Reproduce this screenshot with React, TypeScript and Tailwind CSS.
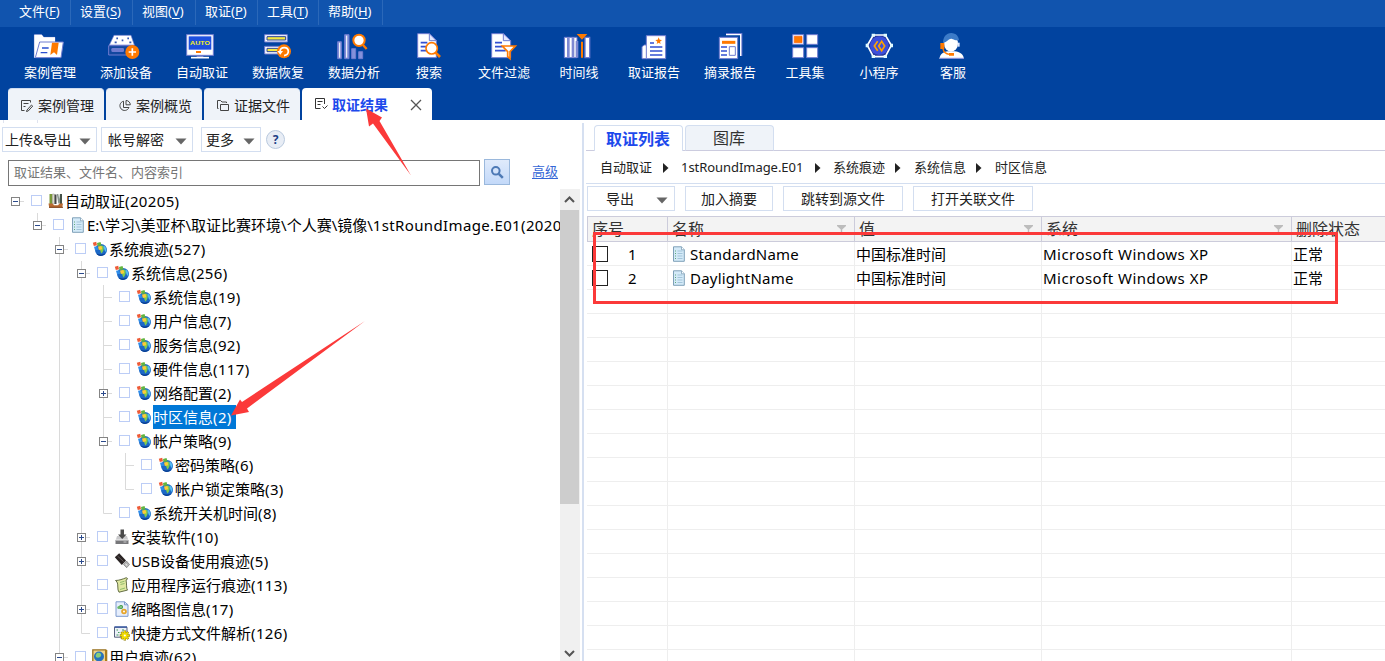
import React from "react";

const P = "#6f7cd0";
const O = "#ff7a00";

function Tool({ vb, label, w, children }: { vb: string; label: string; w?: string; children: React.ReactNode }) {
  return (
    <div className={`flex flex-none flex-col items-center ${w ?? "w-[76px]"}`}>
      <svg viewBox={vb} className="mt-1 h-[30px] w-10 flex-none" fill="none">{children}</svg>
      <span className="mt-px text-[13px] leading-5 whitespace-nowrap text-white">{label}</span>
    </div>
  );
}

function Toolbar() {
  return (
    <div className="flex h-[61px] flex-none bg-[#01439f] pl-3">
      <Tool vb="90 93 120 90" label="案例管理">
        <path d="M103 173V104h22l6 8h34v14" fill="#fff" stroke={P} strokeWidth="2" />
        <path d="M103 173V104h22l6 8h34v60z" fill="#fff" />
        <path d="M119 126h71l-7 47h-77z" fill="#fff" stroke={P} strokeWidth="3" />
        <path d="M126 144h20M122 158h20" stroke="#2a4fd0" strokeWidth="4" />
        <path d="M156 128h20l-5 37-9-8-11 8z" fill={O} />
      </Tool>
      <Tool vb="318 93 120 90" label="添加设备">
        <path d="M342 106h51l10 29h-75z" fill="#fff" stroke={P} strokeWidth="2" />
        <path d="M349 115h5M382 115h5M344 127h6M388 127h6M365 121h5" stroke="#3557b5" strokeWidth="5" />
        <path d="M326 137h76v28h-76z" fill="#12479f" stroke={P} strokeWidth="3" />
        <rect x="334" y="144" width="38" height="12" rx="4" fill={P} />
        <circle cx="397" cy="156" r="21" fill={O} />
        <path d="M386 156h22M397 145v22" stroke="#fff" strokeWidth="5" />
      </Tool>
      <Tool vb="546 93 120 90" label="自动取证">
        <rect x="560" y="104" width="80" height="62" fill="#fff" stroke={P} strokeWidth="3" />
        <rect x="566" y="109" width="68" height="40" fill="#1c50e0" />
        <text x="600" y="135" textAnchor="middle" textLength="60" lengthAdjust="spacingAndGlyphs" fontSize="17" fontWeight="700" fontFamily="Liberation Sans" fill="#f4ef20">AUTO</text>
        <path d="M588 156h15" stroke={O} strokeWidth="6" />
        <path d="M590 168h20v5h-20z" fill={P} />
        <path d="M573 173h54" stroke="#fff" strokeWidth="5" />
      </Tool>
      <Tool vb="774 93 120 90" label="数据恢复">
        <path d="M794 104h68v22h-68z" fill="#fff" stroke={P} strokeWidth="3" />
        <path d="M801 110h56v10h-56z" fill="#f4e840" stroke="#28429c" strokeWidth="3" />
        <path d="M794 139h62v23h-62z" fill="#fff" stroke={P} strokeWidth="3" />
        <path d="M801 145h34v10h-34z" fill="#f4e840" stroke="#28429c" strokeWidth="3" />
        <circle cx="852" cy="154" r="21" fill={O} />
        <path d="M840 155c1-16 24-16 25-1 0 8-5 12-13 13" stroke="#fff" strokeWidth="5" />
        <path d="M832 153h17l-8 11z" fill="#fff" />
      </Tool>
      <Tool vb="1002 93 120 90" label="数据分析">
        <path d="M1013 125h11v51h-11zM1034 104h13v72h-13zM1055 146h12v30h-12zM1076 155h12v21h-12z" fill="#8492da" stroke={P} strokeWidth="3" />
        <path d="M1040 107v66M1019 128v45" stroke="#fff" strokeWidth="3" />
        <circle cx="1077" cy="121" r="17" fill="#fff" stroke={O} strokeWidth="6" />
        <path d="m1089 135 11 12" stroke={O} strokeWidth="7" />
      </Tool>
      <Tool vb="27 93 120 90" label="搜索" w="w-[74px]">
        <path d="M53 101h35l21 21v51H53z" fill="#fff" stroke={P} strokeWidth="3" />
        <path d="M88 101v21h21z" fill="#e3e8ff" stroke={P} strokeWidth="3" />
        <path d="M62 128h20M62 140h20M62 152h20" stroke="#3350d2" strokeWidth="5" />
        <circle cx="95" cy="145" r="17" fill="#fff" stroke={O} strokeWidth="5" />
        <path d="m107 158 13 13" stroke={O} strokeWidth="8" />
      </Tool>
      <Tool vb="252 93 120 90" label="文件过滤">
        <path d="M275 101h35l22 21v51h-57z" fill="#fff" stroke={P} strokeWidth="3" />
        <path d="M310 101v21h22z" fill="#e3e8ff" stroke={P} strokeWidth="3" />
        <path d="M285 128h21M285 140h23M285 152h32" stroke="#3350d2" strokeWidth="5" />
        <path d="M307 138h39l-16 17v21l-7-6v-15z" fill="#fff" stroke={O} strokeWidth="5" />
      </Tool>
      <Tool vb="477 93 120 90" label="时间线" w="w-[74px]">
        <path d="M493 112h38v61h-38z" fill="#fff" stroke={P} strokeWidth="3" />
        <path d="M505 112v61M519 112v61M531 123v50" stroke="#7d89d2" strokeWidth="8" />
        <path d="M555 112h14v61h-14z" fill="#fff" stroke={P} strokeWidth="4" />
        <path d="M546 125v48" stroke={O} strokeWidth="6" />
        <path d="M530 102h32l-16 17z" fill={O} />
      </Tool>
      <Tool vb="702 93 120 90" label="取证报告">
        <path d="M726 176v-36l7-5h8v41z" fill="#fff" stroke={P} strokeWidth="3" />
        <path d="M739 107h58v69h-58z" fill="#fff" stroke={P} strokeWidth="3" />
        <path d="m776 112 3 7 7 1-6 5 2 7-6-4-6 4 2-7-6-5 7-1z" fill={O} />
        <path d="M750 129h12M750 141h37M750 153h37M750 165h37" stroke="#3350d2" strokeWidth="5" />
      </Tool>
      <Tool vb="930 93 120 90" label="摘录报告">
        <path d="M978 101h47v67" stroke={P} strokeWidth="4" />
        <path d="M978 104h44v64" stroke="#fff" strokeWidth="4" />
        <path d="M958 112h55v64h-55z" fill="#fff" stroke={P} strokeWidth="3" />
        <path d="M966 127h40" stroke={O} strokeWidth="9" />
        <path d="M963 141h18M963 153h18M963 165h18" stroke="#3350d2" strokeWidth="5" />
        <path d="M988 140h18v26h-18z" stroke={P} strokeWidth="3" />
      </Tool>
      <Tool vb="255 93 120 90" label="工具集" w="w-[74px]">
        <path d="M278 104h33v29h-33zM320 104h33v29h-33zM278 143h33v30h-33zM320 143h33v30h-33z" fill="#fff" stroke={P} strokeWidth="3" />
        <path d="M283 109h23v19h-23z" fill={O} stroke="#ff5a00" strokeWidth="2" />
      </Tool>
      <Tool vb="477 93 120 90" label="小程序" w="w-[74px]">
        <path d="M520 105h36l18 31-18 34h-36l-18-34z" fill="#26389a" stroke="#fff" strokeWidth="5" />
        <circle cx="538" cy="137" r="28" fill="#3c4fdb" />
        <path d="M515 101h10v9h-10zM551 101h10v9h-10zM570 131h9v11h-9zM551 165h10v9h-10zM515 165h10v9h-10zM497 131h9v11h-9z" fill="#dffaff" />
        <path d="m533 124-10 14 10 14M545 124l-9 14 9 14 9-14z" stroke="#ffa200" strokeWidth="5" />
      </Tool>
      <Tool vb="699 93 120 90" label="客服" w="w-[74px]">
        <path d="M718 177c2-15 11-21 26-23h20c16 2 26 9 28 23z" fill="#fff" />
        <path d="M718 175h74" stroke={P} strokeWidth="3" />
        <ellipse cx="753" cy="131" rx="21" ry="24" fill="#fff" />
        <path d="M729 129c0-17 9-30 25-30 14 0 23 11 23 22-14 0-20-5-24-5-6 0-12 10-24 13z" fill="#3c7bc8" />
        <path d="M773 128h6v12h-6z" fill="#dce6ff" />
        <path d="M721 129h12v18h-12zM747 159h15v8h-15z" fill={O} />
        <path d="M729 147c2 8 8 15 19 16" stroke={O} strokeWidth="4" />
      </Tool>
    </div>
  );
}

function MenuBar() {
  const items = [
    ["文件", "F", "w-[71px] pl-[19px]"],
    ["设置", "S", "w-[62px] pl-[9px]"],
    ["视图", "V", "w-[63px] pl-[9px]"],
    ["取证", "P", "w-[62px] pl-[9px]"],
    ["工具", "T", "w-[61px] pl-[9px]"],
    ["帮助", "H", "w-[64px] pl-[9px]"],
  ];
  return (
    <div className="flex h-[27px] flex-none bg-[#1154ae] text-[13px] leading-[23px] text-white">
      {items.map(([t, k, c]) => (
        <div key={k} className={`h-[25px] flex-none border-r border-[#2b68b9] whitespace-nowrap ${c}`}>
          {t}(<span className="underline underline-offset-2">{k}</span>)
        </div>
      ))}
    </div>
  );
}

function MainTabs() {
  const tab = "flex h-8 flex-none items-center rounded-t-[4px] border-t border-[#cfdcf0] bg-[#eff3f9] pt-[2px] pl-3 w-24 text-[14px] text-[#222] whitespace-nowrap";
  const ic = "mr-1 h-3.5 w-3.5 flex-none";
  return (
    <div className="flex h-8 flex-none gap-0.5 bg-[#01439f] pl-2">
      <div className={tab}>
        <svg viewBox="0 0 14 14" className={ic} fill="none" stroke="#444">
          <path d="M10.500 3.500v-2h-9v10h3M3.500 4.500h5M3.500 7.500h2M7 11l4.500-5 1.200 1.100L8.200 12l-1.700.5z" />
        </svg>
        案例管理
      </div>
      <div className={tab}>
        <svg viewBox="0 0 14 14" className={ic} fill="none" stroke="#444">
          <path d="M5.500 2.200A4.700 4.700 0 1 0 11 8.500H5.500zM8 1.500v4.300h4.300A4.300 4.300 0 0 0 8 1.500z" />
        </svg>
        案例概览
      </div>
      <div className={tab}>
        <svg viewBox="0 0 14 14" className={ic} fill="none" stroke="#444">
          <path d="M2.500 9.500h-1v-8h3l1.500 1.500h4.500v1M4.500 5.500h8v6h-8z" />
        </svg>
        证据文件
      </div>
      <div className="flex h-8 w-[130px] flex-none items-center rounded-t-[4px] bg-white pl-3 text-[14px] whitespace-nowrap">
        <svg viewBox="0 0 14 14" className="mr-1 h-3.5 w-3.5 flex-none" fill="none" stroke="#333">
          <path d="M10.500 7V1.500h-9v10h5M3.500 4.500h5M3.500 7.500h3M8.500 9.500l2 2 3-3" />
        </svg>
        <span className="font-bold text-[#1d49ec]">取证结果</span>
        <svg viewBox="0 0 12 12" className="mt-px ml-[22px] h-3 w-3 flex-none" stroke="#555" strokeWidth="1.300">
          <path d="m1 1 10 10M11 1 1 11" />
        </svg>
      </div>
    </div>
  );
}

function Caret() {
  return (
    <svg viewBox="0 0 12 7" className="mt-[3px] h-[7px] w-3 flex-none" fill="#666"><path d="M.5.5h11L6 6.500z" /></svg>
  );
}

function Globe() {
  return (
    <>
      <circle cx="9" cy="9" r="6" fill="#1c68c6" />
      <path d="M4.500 12.500c2 3.500 7 3 9-.5-3 2-6 1.500-9 .5z" fill="#0b3f92" />
      <path d="M8 5c2.500-1.500 4 0 3.800 2s-.8 4-2.300 5.500C8.500 11 8.500 10 8 9s-1.500-3 0-4z" fill="#7fcb4e" />
      <path d="M11.500 4.500c2.500 1 3.500 4 2.500 6.500-1.500-1-2.500-4-2.500-6.500z" fill="#55bdf2" />
      <path d="M.8 1.800 4.200.8 5 4.200 1.800 5z" fill="#ee5a36" />
      <path d="m5 2 3.500-1 1 3.500L5.500 5z" fill="#63b53f" />
      <path d="m2 5.800 3.300-.6.9 3.500-3.200.5z" fill="#2f8ce8" />
      <path d="m6 5.500 3.500-.6.800 3.300-3.500.7z" fill="#ffcb35" />
    </>
  );
}

function DocShape() {
  return (
    <>
      <path d="M2.500.8h8l2.800 3v11.500H2.500z" fill="#d4eaf8" stroke="#7fa0b8" strokeWidth="1" />
      <path d="M10.500.8v3h2.800" fill="#fff" stroke="#7fa0b8" strokeWidth=".8" />
      <path d="M6.500 5h5M6.500 7.500h5M6.500 10h5M6.500 12.500h5" stroke="#a3c5da" strokeWidth="1" />
      <path d="M4 5h1M4 7.500h1M4 10h1M4 12.500h1" stroke="#5fa97a" strokeWidth="1" />
    </>
  );
}

function TreeIcon({ kind }: { kind: string }) {
  return (
    <svg viewBox="0 0 16 16" className="h-4 w-4 flex-none" fill="none">
      {kind === "globe" && <Globe />}
      {kind === "doc" && <DocShape />}
      {kind === "books" && (
        <>
          <path d="M1.500 1h2.800v10H1.500z" fill="#7a9a3a" />
          <path d="M4.500 1h1.800v10H4.500z" fill="#e5e2d0" stroke="#777" strokeWidth=".4" />
          <path d="M6.500 1.500h2v9.500h-2z" fill="#444" />
          <path d="m8.800 1 1.500 9.500h3V1h-1.500l-.5 5-1-5z" fill="#8b9790" />
          <path d="M12 1h2v10h-2z" fill="#445249" />
          <path d="M.5 10.500h4l1.500 1.800h4l1.500-1.800H15l-.8 4H1.200z" fill="#b96b33" />
          <path d="M1 14.300h14" stroke="#7b3e18" />
        </>
      )}
      {kind === "install" && (
        <>
          <path d="M3 7h10l1.500 5H1.500z" fill="#c9c9cb" />
          <path d="M1.500 11h13v4h-13z" fill="#77777a" />
          <path d="M1.500 11h13" stroke="#eee" />
          <path d="M6.500.5h3.500v5h2.500L8.200 10 4 5.500h2.500z" fill="#4b4b4b" />
          <path d="M9.500 13h3" stroke="#ccc" />
        </>
      )}
      {kind === "usb" && (
        <>
          <path d="m.8 4.200 4.400-4L12 7.500 7.800 12z" fill="#2a2424" />
          <path d="m3.500 3 6 5.500" stroke="#635a5a" />
          <path d="m9.500 11.500 3-3.500 3 3.500-2.800 3.200z" fill="#b5b5b5" stroke="#555" strokeWidth=".5" />
          <path d="m11.500 11 1.800 1.500" stroke="#fff" />
        </>
      )}
      {kind === "scroll" && (
        <>
          <path d="M1.500 3.500C5 3.500 9 2 12 .8c1.500 0 2 1 1 1.800l-1 .5c1 4 0 8 1.500 10L5 15.200C3 13 4.500 7 3 5z" fill="#dfe8a0" stroke="#555f37" strokeWidth=".9" />
          <path d="m6 5.500 4.500-1.300M6.500 7.500l4-1M6 12.500l5-1.500" stroke="#7cb060" strokeWidth=".8" />
        </>
      )}
      {kind === "thumb" && (
        <>
          <path d="M2 .8h8.500l3.500 3v11.500H2z" fill="#e6eefc" stroke="#7c9ace" />
          <path d="M10.500.8v3H14" stroke="#7c9ace" />
          <circle cx="7" cy="6" r="2" fill="#37963b" />
          <circle cx="4.800" cy="6.500" r="1.500" fill="#6cb96a" />
          <circle cx="10" cy="10.500" r="2.800" fill="#e6a52b" />
          <circle cx="10" cy="10.500" r="1" fill="#fff" />
          <circle cx="7" cy="6" r=".7" fill="#fff" />
        </>
      )}
      {kind === "shortcut" && (
        <>
          <path d="M.5 2.200h12.500v10H.5z" fill="#edf1f8" stroke="#46506e" strokeWidth=".9" />
          <path d="M.5 2h12.500" stroke="#2b50a3" strokeWidth="1.300" />
          <path d="M2.500 5h1.500M4 7.500h1.500M2.500 10h2M8 5h2" stroke="#409a5a" strokeWidth="1.200" />
          <path d="M10.800 5.500v10M5.800 10.500h10M7.300 7l7 7M14.300 7l-7 7" stroke="#8a7900" strokeWidth="2.400" />
          <path d="M10.800 6v9M6.300 10.500h9M7.700 7.400l6.200 6.200M13.900 7.400l-6.200 6.200" stroke="#f2dc00" strokeWidth="1.700" />
          <circle cx="10.800" cy="10.500" r="2.800" fill="#f2dc00" />
          <circle cx="10.800" cy="10.500" r="1.100" fill="#fff" />
        </>
      )}
      {kind === "user" && (
        <>
          <path d="M.8.8h13v14.500H.8z" fill="#f0d48a" stroke="#977222" strokeWidth="1.300" />
          <path d="M13 1h2.300v14H13z" fill="#a97c1c" />
          <circle cx="7" cy="7.500" r="5" fill="#2672be" />
          <path d="M5 4c3-1 5 1 4 3s-4 2-5 1 0-3 1-4z" fill="#86ce7b" />
        </>
      )}
    </svg>
  );
}

type Node = [level: number, exp: string, icon: string, text: string, tail: string, last?: boolean, sel?: boolean];
const nodes: Node[] = [
  [0, "-", "books", "自动取证", "(20205)", true],
  [1, "-", "doc", "E:\\学习\\美亚杯\\取证比赛环境\\个人赛\\镜像\\", "1stRoundImage.E01(2020", true],
  [2, "-", "globe", "系统痕迹", "(527)"],
  [3, "-", "globe", "系统信息", "(256)"],
  [4, "", "globe", "系统信息", "(19)"],
  [4, "", "globe", "用户信息", "(7)"],
  [4, "", "globe", "服务信息", "(92)"],
  [4, "", "globe", "硬件信息", "(117)"],
  [4, "+", "globe", "网络配置", "(2)"],
  [4, "", "globe", "时区信息", "(2)", false, true],
  [4, "-", "globe", "帐户策略", "(9)"],
  [5, "", "globe", "密码策略", "(6)"],
  [5, "", "globe", "帐户锁定策略", "(3)", true],
  [4, "", "globe", "系统开关机时间", "(8)", true],
  [3, "+", "install", "安装软件", "(10)"],
  [3, "+", "usb", "USB设备使用痕迹", "(5)"],
  [3, "", "scroll", "应用程序运行痕迹", "(113)"],
  [3, "+", "thumb", "缩略图信息", "(17)"],
  [3, "", "shortcut", "快捷方式文件解析", "(126)", true],
  [2, "-", "user", "用户痕迹", "(62)"],
];

function TreeRow({ node }: { node: Node }) {
  const [level, exp, icon, text, tail, last, sel] = node;
  return (
    <div className="flex h-6 flex-none items-center pl-1">
      {Array.from({ length: level + 1 }, (_, k) => (
        <svg key={k} viewBox="0 0 22 24" className="h-6 w-[22px] flex-none" fill="none" stroke="#dadada">
          {k < level && k >= 2 && <path d="M11.500 0v24" />}
          {k === level && (
            <>
              {level > 0 && <path d="M11.500 0v12.500" />}
              {!last && <path d="M11.500 12v12" />}
              <path d="M11.500 12.500H20" />
              {exp && <rect x="7.500" y="8.500" width="8" height="8" fill="#fff" stroke="#848484" />}
              {exp && <path d="M9 12.500h5" stroke="#2b4a8c" />}
              {exp === "+" && <path d="M11.500 10v5" stroke="#2b4a8c" />}
            </>
          )}
        </svg>
      ))}
      <span className="mr-1.5 mb-[1px] ml-[5px] h-[11px] w-[11px] flex-none border border-[#bccdf6] bg-white" />
      <TreeIcon kind={icon} />
      <span className={`ml-[1px] h-6 flex-none text-[15px] leading-6 whitespace-nowrap ${sel ? "bg-[#0078d7] pr-1 text-white" : "text-black"}`}>
        {text}<span className="tracking-[0.36px]">{tail}</span>
      </span>
    </div>
  );
}

function LeftPanel() {
  const btn = "flex h-[25px] flex-none items-center justify-between border border-[#d3def0] bg-white text-[14px] text-[#222] whitespace-nowrap";
  return (
    <div className="flex w-[582px] flex-none flex-col">
      <div className="flex h-[3px] flex-none"><span className="ml-[3px] h-[3px] w-[35px] border-x border-[#dfe3ef]" /></div>
      <div className="mt-1 flex h-[25px] flex-none pl-0.5">
        <div className={`${btn} w-[95px] pr-[5px] pl-[2px]`}>上传&amp;导出<Caret /></div>
        <div className={`${btn} ml-1 w-[92px] pr-[5px] pl-1.5`}>帐号解密<Caret /></div>
        <div className={`${btn} ml-2 w-[60px] pr-[5px] pl-1`}>更多<Caret /></div>
        <div className="mt-[3px] ml-[5px] flex h-[19px] w-[19px] items-center justify-center rounded-full border border-[#b9c9de] bg-[#e8edf5] text-[12px] font-bold text-[#1c3f86]">?</div>
      </div>
      <div className="mt-[7px] flex h-[27px] flex-none pl-2">
        <div className="mt-[1px] h-[26px] w-[472px] flex-none border border-[#767676] pl-[5px] text-[13px] leading-[23px] text-[#757575]">取证结果、文件名、内容索引</div>
        <div className="ml-1 flex h-[26px] w-[26px] flex-none items-center justify-center border border-[#9ab8dc] bg-linear-to-b from-[#dfeafb] to-[#c3d9f9]">
          <svg viewBox="0 0 14 14" className="h-3.5 w-3.5" fill="none" stroke="#4d79b5">
            <circle cx="5.800" cy="5.800" r="3.800" strokeWidth="2" /><path d="m8.800 8.800 4 4" strokeWidth="2.500" />
          </svg>
        </div>
        <span className="ml-[22px] text-[13px] leading-[25px] text-[#3567d6] underline underline-offset-2">高级</span>
      </div>
      <div className="mt-[3px] flex min-h-0 flex-1">
        <div className="flex w-[560px] flex-none flex-col overflow-hidden">
          {nodes.map((n, i) => <TreeRow key={i} node={n} />)}
        </div>
        <div className="flex w-5 flex-none flex-col bg-[#f0f0f0]">
          <svg viewBox="0 0 20 21" className="h-[21px] w-5 flex-none" fill="none" stroke="#555" strokeWidth="2"><path d="m5 13 4.500-4.500L14 13" /></svg>
          <div className="h-[294px] w-[19px] flex-none bg-[#cdcdcd]" />
          <svg viewBox="0 0 20 21" className="mt-auto h-[21px] w-5 flex-none" fill="none" stroke="#555" strokeWidth="2"><path d="m5 11 4.500 4.500L14 11" /></svg>
        </div>
      </div>
    </div>
  );
}

const cols = ["w-[81px]", "w-[187px]", "w-[187px]", "w-[250px]", "w-[120px]"];

function Head({ i, t, filter }: { i: number; t: string; filter?: boolean }) {
  return (
    <div className={`flex flex-none items-center justify-between border-r border-[#ccccdb] pr-2 pl-1 text-[16px] text-[#333] ${i === 0 ? "w-20" : cols[i]}`}>
      {t}
      {filter && <svg viewBox="0 0 9 9" className="h-[9px] w-[9px]" fill="#bcbcbc"><path d="M0 0h9v1L5.200 4.500V9H3.800V4.500L0 1z" /></svg>}
    </div>
  );
}

function Table() {
  const cell = "flex-none border-r border-b border-[#eeeeee] whitespace-nowrap flex items-center";
  return (
    <div className="mt-[5px] ml-[3px] flex min-h-0 flex-1 flex-col overflow-hidden">
      <div className="flex h-[26px] flex-none overflow-hidden border-y border-l border-[#ccccdb] bg-[#f3f3f3]">
        <Head i={0} t="序号" /><Head i={1} t="名称" filter /><Head i={2} t="值" filter /><Head i={3} t="系统" filter /><Head i={4} t="删除状态" />
      </div>
      {Array.from({ length: 18 }, (_, r) => (
        <div key={r} className="flex h-6 flex-none overflow-hidden text-[15px] leading-6 text-black">
          <div className={`${cell} ${cols[0]}`}>
            {r < 2 && <><span className="ml-[5px] h-4 w-4 flex-none border border-[#222]" /><span className="ml-5">{r + 1}</span></>}
          </div>
          <div className={`${cell} ${cols[1]} pl-[3px]`}>
            {r < 2 && <><TreeIcon kind="doc" /><span className="ml-[3px] tracking-[0.22px]">{r === 0 ? "StandardName" : "DaylightName"}</span></>}
          </div>
          <div className={`${cell} ${cols[2]} pl-[1px]`}>{r < 2 && "中国标准时间"}</div>
          <div className={`${cell} ${cols[3]} pl-[1px] tracking-[0.46px]`}>{r < 2 && "Microsoft Windows XP"}</div>
          <div className={`${cell} ${cols[4]} pl-[1px]`}>{r < 2 && "正常"}</div>
        </div>
      ))}
    </div>
  );
}

function RightPanel() {
  const btn = "flex h-[25px] flex-none items-center justify-center border border-[#d3def0] bg-white text-[14px] text-[#222] whitespace-nowrap";
  const arrow = <svg viewBox="0 0 6 10" className="h-2.5 w-1.5 flex-none" fill="#222"><path d="m0 0 5.500 5L0 10z" /></svg>;
  return (
    <div className="flex min-w-0 flex-1 flex-col">
      <div className="flex h-[31px] flex-none items-end pl-0.5">
        <span className="w-2 flex-none self-stretch border-b border-[#ccccdf]" />
        <div className="flex h-[26px] w-[89px] flex-none items-center justify-center rounded-t-[4px] border border-b-0 border-[#d3def0] bg-white pr-px text-[16px] font-bold text-[#1d49ec]">取证列表</div>
        <span className="w-0.5 flex-none self-stretch border-b border-[#ccccdf]" />
        <div className="flex h-[26px] w-[89px] flex-none items-center justify-center rounded-t-[4px] border border-[#d3def0] border-b-[#ccccdf] bg-[#eff3f9] pr-px text-[16px] text-[#333]">图库</div>
        <span className="flex-1 self-stretch border-b border-[#ccccdf]" />
      </div>
      <div className="ml-0.5 flex h-[33px] flex-none items-center border-b border-[#d3def0] pt-[2px] pl-3.5 text-[13px] whitespace-nowrap text-[#222]">
        <span className="w-[63px]">自动取证</span>{arrow}
        <span className="ml-3 w-[134px]"><span className="tracking-[-0.05px]">1stRoundImage.E01</span></span>{arrow}
        <span className="ml-3 w-[62px]">系统痕迹</span>{arrow}
        <span className="ml-[13px] w-[62px]">系统信息</span>{arrow}
        <span className="ml-[13px]">时区信息</span>
      </div>
      <div className="mt-0.5 ml-[3px] flex h-[25px] flex-none">
        <div className={`${btn} w-[88px] gap-[22px] pl-3`}>导出<Caret /></div>
        <div className={`${btn} ml-2.5 w-[88px]`}>加入摘要</div>
        <div className={`${btn} ml-2.5 w-[120px]`}>跳转到源文件</div>
        <div className={`${btn} ml-2.5 w-[120px]`}>打开关联文件</div>
      </div>
      <Table />
    </div>
  );
}

export default function App() {
  return (
    <div className="relative flex h-[661px] w-[1385px] flex-col overflow-hidden bg-white font-['Noto_Sans','Noto_Sans_CJK_SC',sans-serif]">
      <MenuBar />
      <Toolbar />
      <MainTabs />
      <div className="flex min-h-0 flex-1">
        <LeftPanel />
        <div className="mt-[3px] w-0.5 flex-none bg-[#d6e0f1]" />
        <RightPanel />
      </div>
      <div className="absolute top-[232px] left-[593px] h-[72px] w-[745px] border-3 border-[#fb3939]" />
      <svg viewBox="0 0 50 70" className="absolute top-[107px] left-[364px] h-[70px] w-[50px]" fill="#fb3939">
        <path d="m2 1.500 16 9-2.500 3.500L47 68.500 9 16.500l-4 3z" />
      </svg>
      <svg viewBox="0 0 136 98" className="absolute top-[320px] left-[230px] h-[98px] w-[136px]" fill="#fb3939">
        <path d="m1 95.500 9-16 2 2.500L135 1 17 88.500l2 3.500z" />
      </svg>
    </div>
  );
}
